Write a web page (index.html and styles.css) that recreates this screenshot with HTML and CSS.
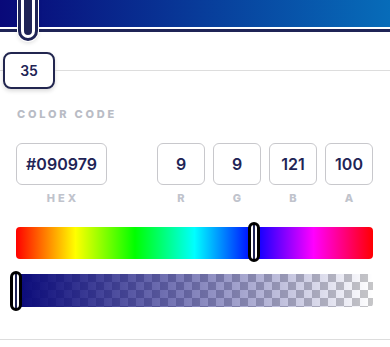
FILE: index.html
```html
<!DOCTYPE html>
<html lang="en">
<head>
    <meta charset="UTF-8">
    <meta name="viewport" content="width=device-width, initial-scale=1.0">
    <title>Color Picker</title>
    <link rel="stylesheet" href="styles.css">
</head>
<body>
    <div class="picker">
        <div class="preview">
            <div class="stop-handle"></div>
        </div>
        <div class="stop-track"></div>

        <div class="stop-row">
            <span class="rule rule-left"></span>
            <div class="stop-box">35</div>
            <span class="rule"></span>
        </div>

        <div class="section-title">COLOR CODE</div>

        <div class="codes">
            <div class="field hex">
                <div class="input">#090979</div>
                <div class="label">HEX</div>
            </div>
            <div class="channels">
                <div class="field">
                    <div class="input">9</div>
                    <div class="label">R</div>
                </div>
                <div class="field">
                    <div class="input">9</div>
                    <div class="label">G</div>
                </div>
                <div class="field">
                    <div class="input">121</div>
                    <div class="label">B</div>
                </div>
                <div class="field">
                    <div class="input">100</div>
                    <div class="label">A</div>
                </div>
            </div>
        </div>

        <div class="slider hue">
            <div class="thumb hue-thumb"></div>
        </div>
        <div class="slider alpha">
            <div class="thumb alpha-thumb"></div>
        </div>

        <div class="bottom-rule"></div>
    </div>
</body>
</html>
```

FILE: styles.css
```css
body {
    margin: 0;
    font-family: Inter, "Open Sans", sans-serif;
    background-color: #fff;
    color: #1f2456;
}

.picker {
    width: 390px;
}

.preview {
    position: relative;
    height: 27px;
    background: linear-gradient(90deg, #090979 0%, #076cb9 100%);
}

.stop-handle {
    position: absolute;
    left: 21px;
    top: -22px;
    width: 8px;
    height: 54px;
    background-color: #1f2456;
    border: 3px solid #fff;
    border-radius: 0 0 10px 10px;
    box-shadow: 0 0 0 3px #1f2456, 0 0 0 4px #fff, 0 2px 4px 3px rgba(0, 0, 0, 0.15);
    z-index: 2;
}

.stop-track {
    height: 3px;
    margin-top: 2px;
    background-color: #1f2456;
}

.stop-row {
    display: flex;
    align-items: center;
    margin-top: 20px;
}

.rule {
    flex: 1;
    height: 1px;
    background-color: #dddddd;
}

.rule-left {
    flex: 0 0 3px;
}

.stop-box {
    width: 48px;
    height: 33px;
    display: flex;
    align-items: center;
    justify-content: center;
    border: 2px solid #22264f;
    border-radius: 8px;
    font-size: 14px;
    font-weight: 600;
    box-shadow: 0 2px 4px rgba(0, 0, 0, 0.15);
}

.section-title {
    margin: 18px 0 0 17px;
    font-size: 11px;
    line-height: 14px;
    font-weight: 800;
    letter-spacing: 2.8px;
    color: #b9bcc5;
}

.codes {
    display: flex;
    justify-content: space-between;
    margin: 22px 17px 0 16px;
}

.channels {
    display: flex;
    gap: 8px;
}

.field {
    width: 48px;
}

.field.hex {
    width: 91px;
}

.input {
    height: 40px;
    display: flex;
    align-items: center;
    justify-content: center;
    border: 1px solid #c8c8cc;
    border-radius: 6px;
    font-size: 16px;
    font-weight: 600;
    color: #1f2456;
}

.label {
    margin-top: 6px;
    text-align: center;
    font-size: 11px;
    line-height: 14px;
    font-weight: 800;
    letter-spacing: 3px;
    text-indent: 3px;
    color: #c0c3cc;
}

.slider {
    position: relative;
    margin: 0 17px 0 16px;
    height: 32px;
    border-radius: 4px;
}

.hue {
    margin-top: 22px;
    background: linear-gradient(90deg, #ff0000 0%, #ffff00 16.67%, #00ff00 33.33%, #00ffff 50%, #0000ff 66.67%, #ff00ff 83.33%, #ff0000 100%);
}

.alpha {
    margin-top: 15px;
    height: 33px;
    background:
        linear-gradient(90deg, #090979, rgba(9, 9, 121, 0)),
        conic-gradient(#c6c6c8 25%, #ffffff 0 50%, #c6c6c8 0 75%, #ffffff 0) 0 0 / 16px 16px;
}

.thumb {
    position: absolute;
    width: 6px;
    height: 34px;
    border: 3px solid #000;
    border-radius: 6px;
    background: linear-gradient(90deg, #fff 2px, #1f2456 2px, #1f2456 4px, #fff 4px);
}

.hue-thumb {
    left: 232px;
    top: -5px;
}

.alpha-thumb {
    left: -6px;
    top: -3px;
}

.bottom-rule {
    height: 1px;
    margin-top: 32px;
    background-color: #dddddd;
}
```
